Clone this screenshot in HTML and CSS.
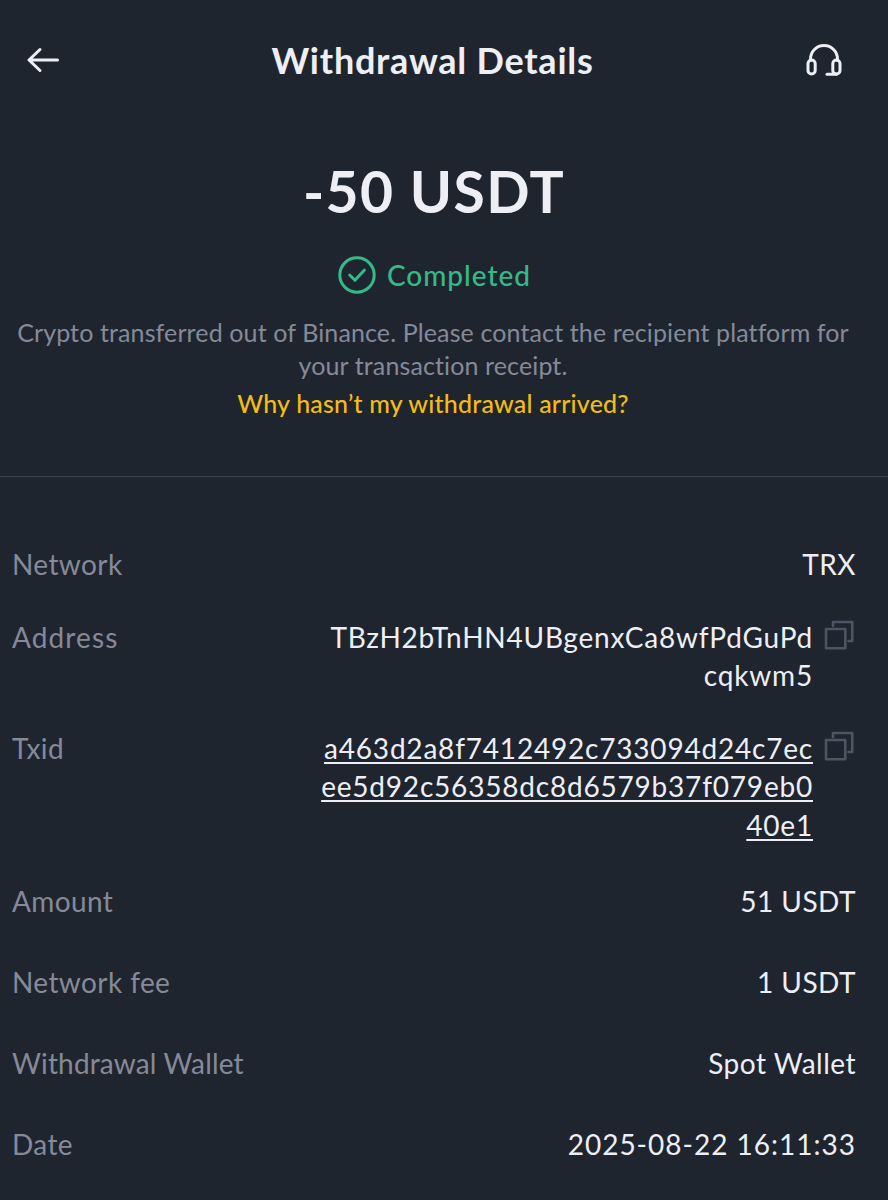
FILE: index.html
```html
<!DOCTYPE html>
<html lang="en">
<head>
    <meta charset="UTF-8">
    <meta name="viewport" content="width=device-width, initial-scale=1.0">
    <title>Withdrawal Details</title>
    <link rel="stylesheet" href="styles.css">
</head>
<body>
    <header class="top-bar">
        <svg class="back-icon" width="36" height="28" viewBox="0 0 36 28">
            <path d="M32.5 14H4M15 3.5L4 14L15 24.5"/>
        </svg>
        <h1>Withdrawal Details</h1>
        <svg class="support-icon" width="40" height="36" viewBox="0 0 40 36">
            <path d="M6.5 18.5V17C6.5 9.5 12.5 3.5 20 3.5S33.5 9.5 33.5 17V18.5"/>
            <rect x="4" y="18" width="7.2" height="14" rx="3.6"/>
            <rect x="28.8" y="18" width="7.2" height="14" rx="3.6"/>
            <path d="M32.5 32.3H23"/>
        </svg>
    </header>

    <section class="summary">
        <div class="amount">-50 USDT</div>
        <div class="status">
            <svg width="38" height="38" viewBox="0 0 38 38">
                <circle cx="19" cy="19" r="17.2"/>
                <path d="M11.7 19L16.9 24.3L26.3 14.2"/>
            </svg>
            <span>Completed</span>
        </div>
        <p class="description">Crypto transferred out of Binance. Please contact the recipient platform for<br>your transaction receipt.</p>
        <a class="help-link">Why hasn’t my withdrawal arrived?</a>
    </section>

    <section class="details">
        <div class="row network">
            <span class="label">Network</span>
            <span class="value">TRX</span>
        </div>
        <div class="row address">
            <span class="label">Address</span>
            <span class="value">TBzH2bTnHN4UBgenxCa8wfPdGuPd<br>cqkwm5</span>
            <svg class="copy-icon" width="30" height="30" viewBox="0 0 30 30">
                <rect x="2" y="9" width="19.3" height="19.3"/>
                <path d="M9 6V2H28.2V21H24.5"/>
            </svg>
        </div>
        <div class="row txid">
            <span class="label">Txid</span>
            <span class="value">a463d2a8f7412492c733094d24c7ec<br>ee5d92c56358dc8d6579b37f079eb0<br>40e1</span>
            <svg class="copy-icon" width="30" height="30" viewBox="0 0 30 30">
                <rect x="2" y="9" width="19.3" height="19.3"/>
                <path d="M9 6V2H28.2V21H24.5"/>
            </svg>
        </div>
        <div class="row">
            <span class="label">Amount</span>
            <span class="value">51 USDT</span>
        </div>
        <div class="row">
            <span class="label">Network fee</span>
            <span class="value">1 USDT</span>
        </div>
        <div class="row wallet">
            <span class="label">Withdrawal Wallet</span>
            <span class="value">Spot Wallet</span>
        </div>
        <div class="row date">
            <span class="label">Date</span>
            <span class="value">2025-08-22 16:11:33</span>
        </div>
    </section>
</body>
</html>
```
FILE: styles.css
```css
* {
    box-sizing: border-box;
}

body {
    margin: 0;
    height: 1200px;
    overflow: hidden;
    font-family: Lato, "Open Sans", sans-serif;
    font-variant-ligatures: none;
    background-color: #1f252f;
    color: #eeeff5;
}

svg {
    fill: none;
    stroke-linecap: round;
    stroke-linejoin: round;
    flex-shrink: 0;
}

.top-bar {
    display: flex;
    justify-content: space-between;
    align-items: center;
    height: 44px;
    margin-top: 38px;
    padding: 0 44px 0 25px;
}

.top-bar svg {
    stroke: #eeeff5;
    stroke-width: 3;
}

h1 {
    margin: 0;
    font-size: 36px;
    line-height: 44px;
    font-weight: 700;
    letter-spacing: 0.75px;
}

.summary {
    display: flex;
    flex-direction: column;
    align-items: center;
    height: 395px;
    padding: 77px 22px 0 0;
    border-bottom: 1px solid #3a404a;
    text-align: center;
}

.amount {
    padding-left: 2px;
    font-size: 57px;
    line-height: 64px;
    font-weight: 700;
    letter-spacing: 1.4px;
}

.status {
    display: flex;
    align-items: center;
    gap: 11px;
    height: 38px;
    margin-top: 33px;
    padding-left: 3px;
    font-size: 28px;
    font-weight: 500;
    letter-spacing: 1px;
    color: #35ba87;
}

.status svg {
    stroke: #35ba87;
    stroke-width: 3;
}

.description {
    margin: 22px 0 0;
    font-size: 25px;
    line-height: 32.5px;
    letter-spacing: 0.12px;
    color: #858a99;
    white-space: nowrap;
}

.help-link {
    margin-top: 6px;
    font-size: 25px;
    line-height: 32.5px;
    font-weight: 500;
    letter-spacing: 0.2px;
    color: #f3bc16;
}

.details {
    padding: 68px 32px 0 12px;
    font-size: 28px;
    line-height: 38.4px;
}

.row {
    display: flex;
    align-items: flex-start;
    margin-bottom: 42.4px;
}

.network,
.address {
    margin-bottom: 34.4px;
}

.txid {
    margin-bottom: 38px;
}

.label {
    color: #858a99;
    letter-spacing: 0.4px;
}

.address .label {
    letter-spacing: 1.1px;
}

.wallet .label {
    letter-spacing: 0.15px;
}

.value {
    margin-left: auto;
    text-align: right;
    white-space: nowrap;
    letter-spacing: 0.5px;
}

.address .value,
.txid .value {
    letter-spacing: 0.8px;
}

.date .value {
    letter-spacing: 1px;
}

.txid .value {
    text-decoration: underline;
    text-decoration-thickness: 2px;
    text-underline-offset: 3px;
}

.copy-icon {
    margin: 2px 2px 0 11px;
    stroke: #4e5462;
    stroke-width: 2.6;
}
```
